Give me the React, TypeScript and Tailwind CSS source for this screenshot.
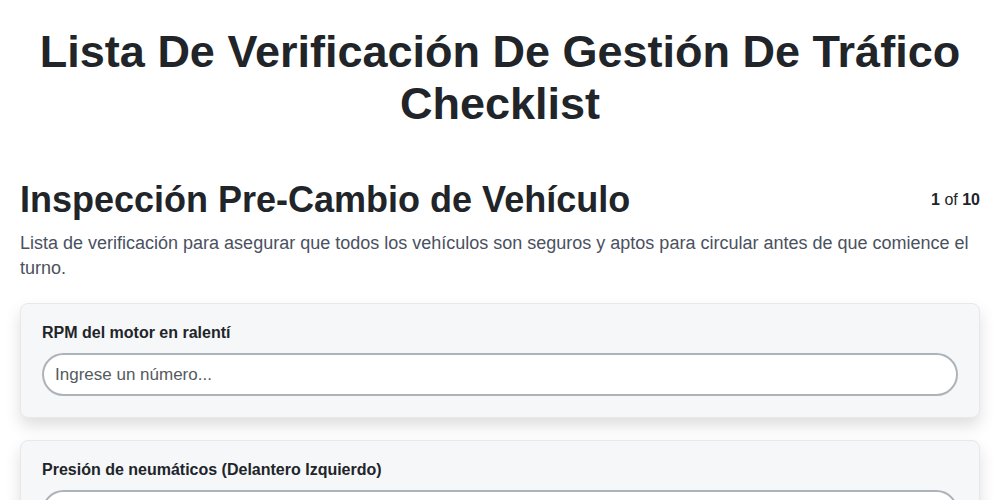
import React from "react";

const fields = [
  { label: "RPM del motor en ralentí", placeholder: "Ingrese un número..." },
  { label: "Presión de neumáticos (Delantero Izquierdo)", placeholder: "Ingrese un número..." },
  { label: "Presión de neumáticos (Delantero Derecho)", placeholder: "Ingrese un número..." },
];

export default function App() {
  return (
    <div className="min-h-screen bg-white font-['Liberation_Sans',Arial,sans-serif] text-[#212529]">
      <h1 className="mx-auto max-w-[980px] px-5 pt-[26px] text-center text-[45px] font-bold leading-[52px]">
        Lista De Verificación De Gestión De Tráfico Checklist
      </h1>

      <div className="px-5 pt-[48px]">
        <div className="flex items-start justify-between">
          <h2 className="text-[36px] font-bold leading-[44px]">
            Inspección Pre-Cambio de Vehículo
          </h2>
          <span className="pt-[12px] text-[16px] leading-5">
            <b>1</b> of <b>10</b>
          </span>
        </div>
        <p className="mt-[9px] text-[18px] leading-[25px] text-[#4a5160]">
          Lista de verificación para asegurar que todos los vehículos son seguros y aptos para circular antes de que comience el turno.
        </p>

        {/* question cards */}
        <div className="mt-[22px] flex flex-col gap-[22px]">
          {fields.map((f) => (
            <div
              key={f.label}
              className="rounded-lg border border-[#e6e8ec] bg-[#f6f7f9] px-[21px] pb-[21px] pt-[19px] shadow-[0_8px_16px_rgba(0,0,0,0.13)]"
            >
              <label className="block text-[16px] font-bold leading-5 text-[#212529]">
                {f.label}
              </label>
              <input
                type="text"
                placeholder={f.placeholder}
                className="mt-[10px] block h-[43px] w-full rounded-full border-2 border-[#adb3bb] bg-white px-[11px] text-[17px] text-[#212529] outline-none placeholder:text-[#555a60]"
              />
            </div>
          ))}
        </div>
      </div>
    </div>
  );
}
